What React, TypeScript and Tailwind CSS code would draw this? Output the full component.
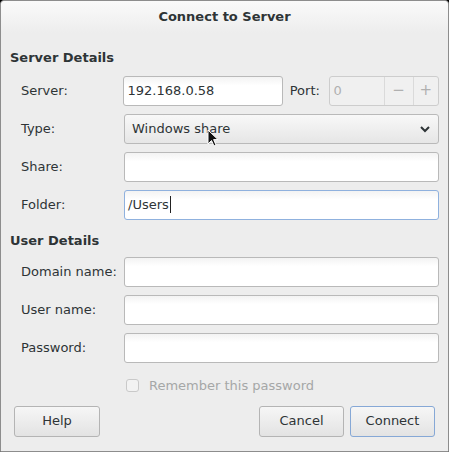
import React from 'react';

const font = { fontFamily: '"DejaVu Sans", "Noto Sans", sans-serif' };

const Entry = ({ value, focused, caret }: { value?: string; focused?: boolean; caret?: boolean }) => (
  <div
    className={`flex h-[30px] flex-1 items-center rounded-[3px] border bg-gradient-to-b from-[#f3f3f3] to-white to-[30%] px-[3px] text-[13px] text-[#2e3436] ${
      focused ? 'border-[#8fb1de]' : 'border-[#b9b9b9]'
    }`}
  >
    <span>{value}</span>
    {caret && <span className="ml-[1px] h-[17px] w-[1px] bg-[#222]" />}
  </div>
);

const Row = ({ label, children }: { label: string; children: React.ReactNode }) => (
  <div className="flex items-center pl-[20px] pr-[9px]">
    <span className="w-[103px] text-[13px] text-[#2e3436]">{label}</span>
    {children}
  </div>
);

const Button = ({ label, width, focused }: { label: string; width: string; focused?: boolean }) => (
  <button
    className={`flex h-[31px] items-center justify-center rounded-[3px] border bg-gradient-to-b from-[#f6f6f6] to-[#e3e3e3] text-[13px] text-[#2e3436] ${width} ${
      focused ? 'border-[#86a8d6]' : 'border-[#b4b4b4]'
    }`}
  >
    {label}
  </button>
);

export default function App() {
  return (
    <div className="h-[452px] w-[449px] bg-black" style={font}>
      <div className="relative flex h-[452px] w-[449px] flex-col rounded-t-[4px] border border-[#8d8d8d] bg-[#ededed]">
        {/* title bar */}
        <div className="flex h-[32px] items-center justify-center rounded-t-[4px] bg-gradient-to-b from-[#fafafa] to-[#ededed]">
          <span className="text-[13px] font-bold text-[#2e3436]">Connect to Server</span>
        </div>

        <div className="mt-[15px] pl-[9px] text-[13px] font-bold text-[#2e3436]">Server Details</div>

        <div className="mt-[8px] flex flex-col gap-[8px]">
          <Row label="Server:">
            <div className="flex h-[30px] w-[160px] items-center rounded-[3px] border border-[#b9b9b9] bg-gradient-to-b from-[#f3f3f3] to-white to-[30%] px-[3px] text-[13px] text-[#2e3436]">
              192.168.0.58
            </div>
            <span className="ml-[7px] w-[39px] text-[13px] text-[#2e3436]">Port:</span>
            <div className="flex h-[30px] w-[111px] rounded-[3px] border border-[#cdcdcd] bg-[#f0f0f0] text-[13px] text-[#b0b0b0]">
              <span className="flex w-[54px] items-center px-[4px]">0</span>
              <span className="flex w-[29px] items-center justify-center border-l border-[#dadada] text-[15px]">−</span>
              <span className="flex flex-1 items-center justify-center border-l border-[#dadada] text-[15px]">+</span>
            </div>
          </Row>
          <Row label="Type:">
            <div className="flex h-[30px] flex-1 items-center justify-between rounded-[3px] border border-[#b9b9b9] bg-gradient-to-b from-[#f8f8f8] to-[#e6e6e6] pl-[7px] pr-[7px] text-[13px] text-[#2e3436]">
              <span>Windows share</span>
              <svg width="12" height="8" viewBox="0 0 12 8">
                <path d="M2 2 L6 6 L10 2" fill="none" stroke="#2e3436" strokeWidth="2" />
              </svg>
            </div>
          </Row>
          <Row label="Share:">
            <Entry />
          </Row>
          <Row label="Folder:">
            <Entry value="/Users" focused caret />
          </Row>
        </div>

        <div className="mt-[11px] pl-[9px] text-[13px] font-bold text-[#2e3436]">User Details</div>

        <div className="mt-[7px] flex flex-col gap-[8px]">
          <Row label="Domain name:">
            <Entry />
          </Row>
          <Row label="User name:">
            <Entry />
          </Row>
          <Row label="Password:">
            <Entry />
          </Row>
        </div>

        <div className="mt-[13px] flex items-center pl-[125px]">
          <span className="h-[13px] w-[13px] rounded-[3px] border border-[#c9c9c9] bg-[#f2f2f2]" />
          <span className="ml-[10px] text-[13px] text-[#a5a7a7]">Remember this password</span>
        </div>

        <div className="mt-[10px] flex items-center pl-[13px] pr-[13px]">
          <Button label="Help" width="w-[86px]" />
          <div className="flex-1" />
          <Button label="Cancel" width="w-[85px]" />
          <div className="w-[6px]" />
          <Button label="Connect" width="w-[85px]" focused />
        </div>

        {/* mouse pointer */}
        <svg className="absolute left-[206px] top-[128px]" width="12" height="19" viewBox="0 0 12 19">
          <path d="M1 1 L1 15 L4.5 11.5 L7 17 L9 16 L6.6 10.6 L11 10.6 Z" fill="#111" stroke="#fff" strokeWidth="1" />
        </svg>
      </div>
    </div>
  );
}
